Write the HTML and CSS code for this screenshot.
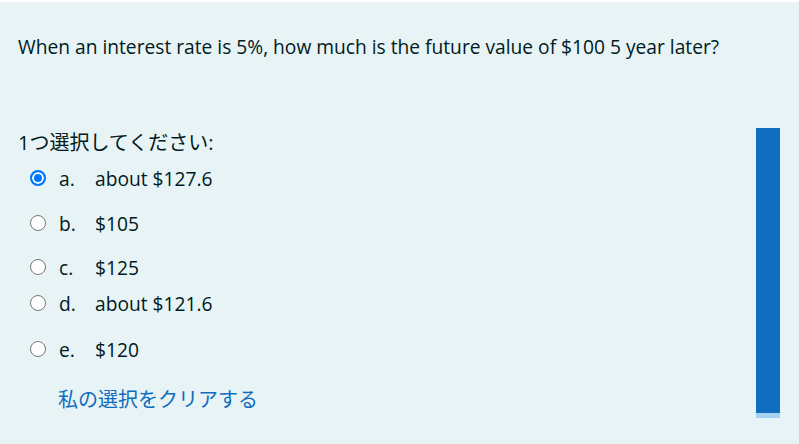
FILE: index.html
```
<!DOCTYPE html>
<html lang="ja">
<head>
  <meta charset="UTF-8">
  <title>Question</title>
  <link rel="stylesheet" href="styles.css">
</head>
<body>
  <div class="que">
    <div class="content">
      <div class="qtext">When an interest rate is 5%, how much is the future value of $100 5 year later?</div>

      <div class="prompt">1つ選択してください:</div>
      <div class="answer">
        <label class="opt gap-a">
          <input type="radio" name="q1" checked>
          <span class="num">a.</span>
          <span class="txt">about $127.6</span>
        </label>
        <label class="opt gap-b">
          <input type="radio" name="q1">
          <span class="num">b.</span>
          <span class="txt">$105</span>
        </label>
        <label class="opt">
          <input type="radio" name="q1">
          <span class="num">c.</span>
          <span class="txt">$125</span>
        </label>
        <label class="opt gap-d">
          <input type="radio" name="q1">
          <span class="num">d.</span>
          <span class="txt">about $121.6</span>
        </label>
        <label class="opt">
          <input type="radio" name="q1">
          <span class="num">e.</span>
          <span class="txt">$120</span>
        </label>
      </div>
      <a href="#" class="clear">私の選択をクリアする</a>
    </div>
    <div class="side">
      <div class="bar"></div>
    </div>
  </div>
</body>
</html>
```

FILE: styles.css
```
body { margin: 0; background: #fff; color: #001a1e; font-family: "Open Sans", "Noto Sans CJK JP", sans-serif; font-size: 19.2px; }
.que { display: flex; margin-top: 2px; height: 442px; background: #e7f3f5; }
.content { flex: 1; padding: 0 18px; }
.qtext { padding-top: 30px; line-height: 30px; }
.prompt { margin-top: 66px; line-height: 30px; font-size: 20px; }
.answer { margin-top: 2px; }
.opt { display: flex; align-items: center; height: 36px; }
.opt input { appearance: none; box-sizing: border-box; width: 16px; height: 16px; margin: 0 13px 0 12px; border: 1.5px solid #767676; border-radius: 50%; background: #fff; }
.opt input:checked { border: 2px solid #0075ff; background: #0075ff; box-shadow: inset 0 0 0 2px #fff; }
.num { width: 36px; }
.gap-a { margin-bottom: 9px; }
.gap-b { margin-bottom: 8px; }
.gap-d { margin-bottom: 10px; }
.clear { display: block; margin: 18px 0 0 40px; line-height: 30px; font-size: 20px; color: #0f6cbf; text-decoration: none; }
.side { width: 24px; margin-right: 19px; padding-top: 126px; }
.bar { height: 285px; background: #0f6cbf; border-bottom: 5px solid #a6d1f5; }
```
